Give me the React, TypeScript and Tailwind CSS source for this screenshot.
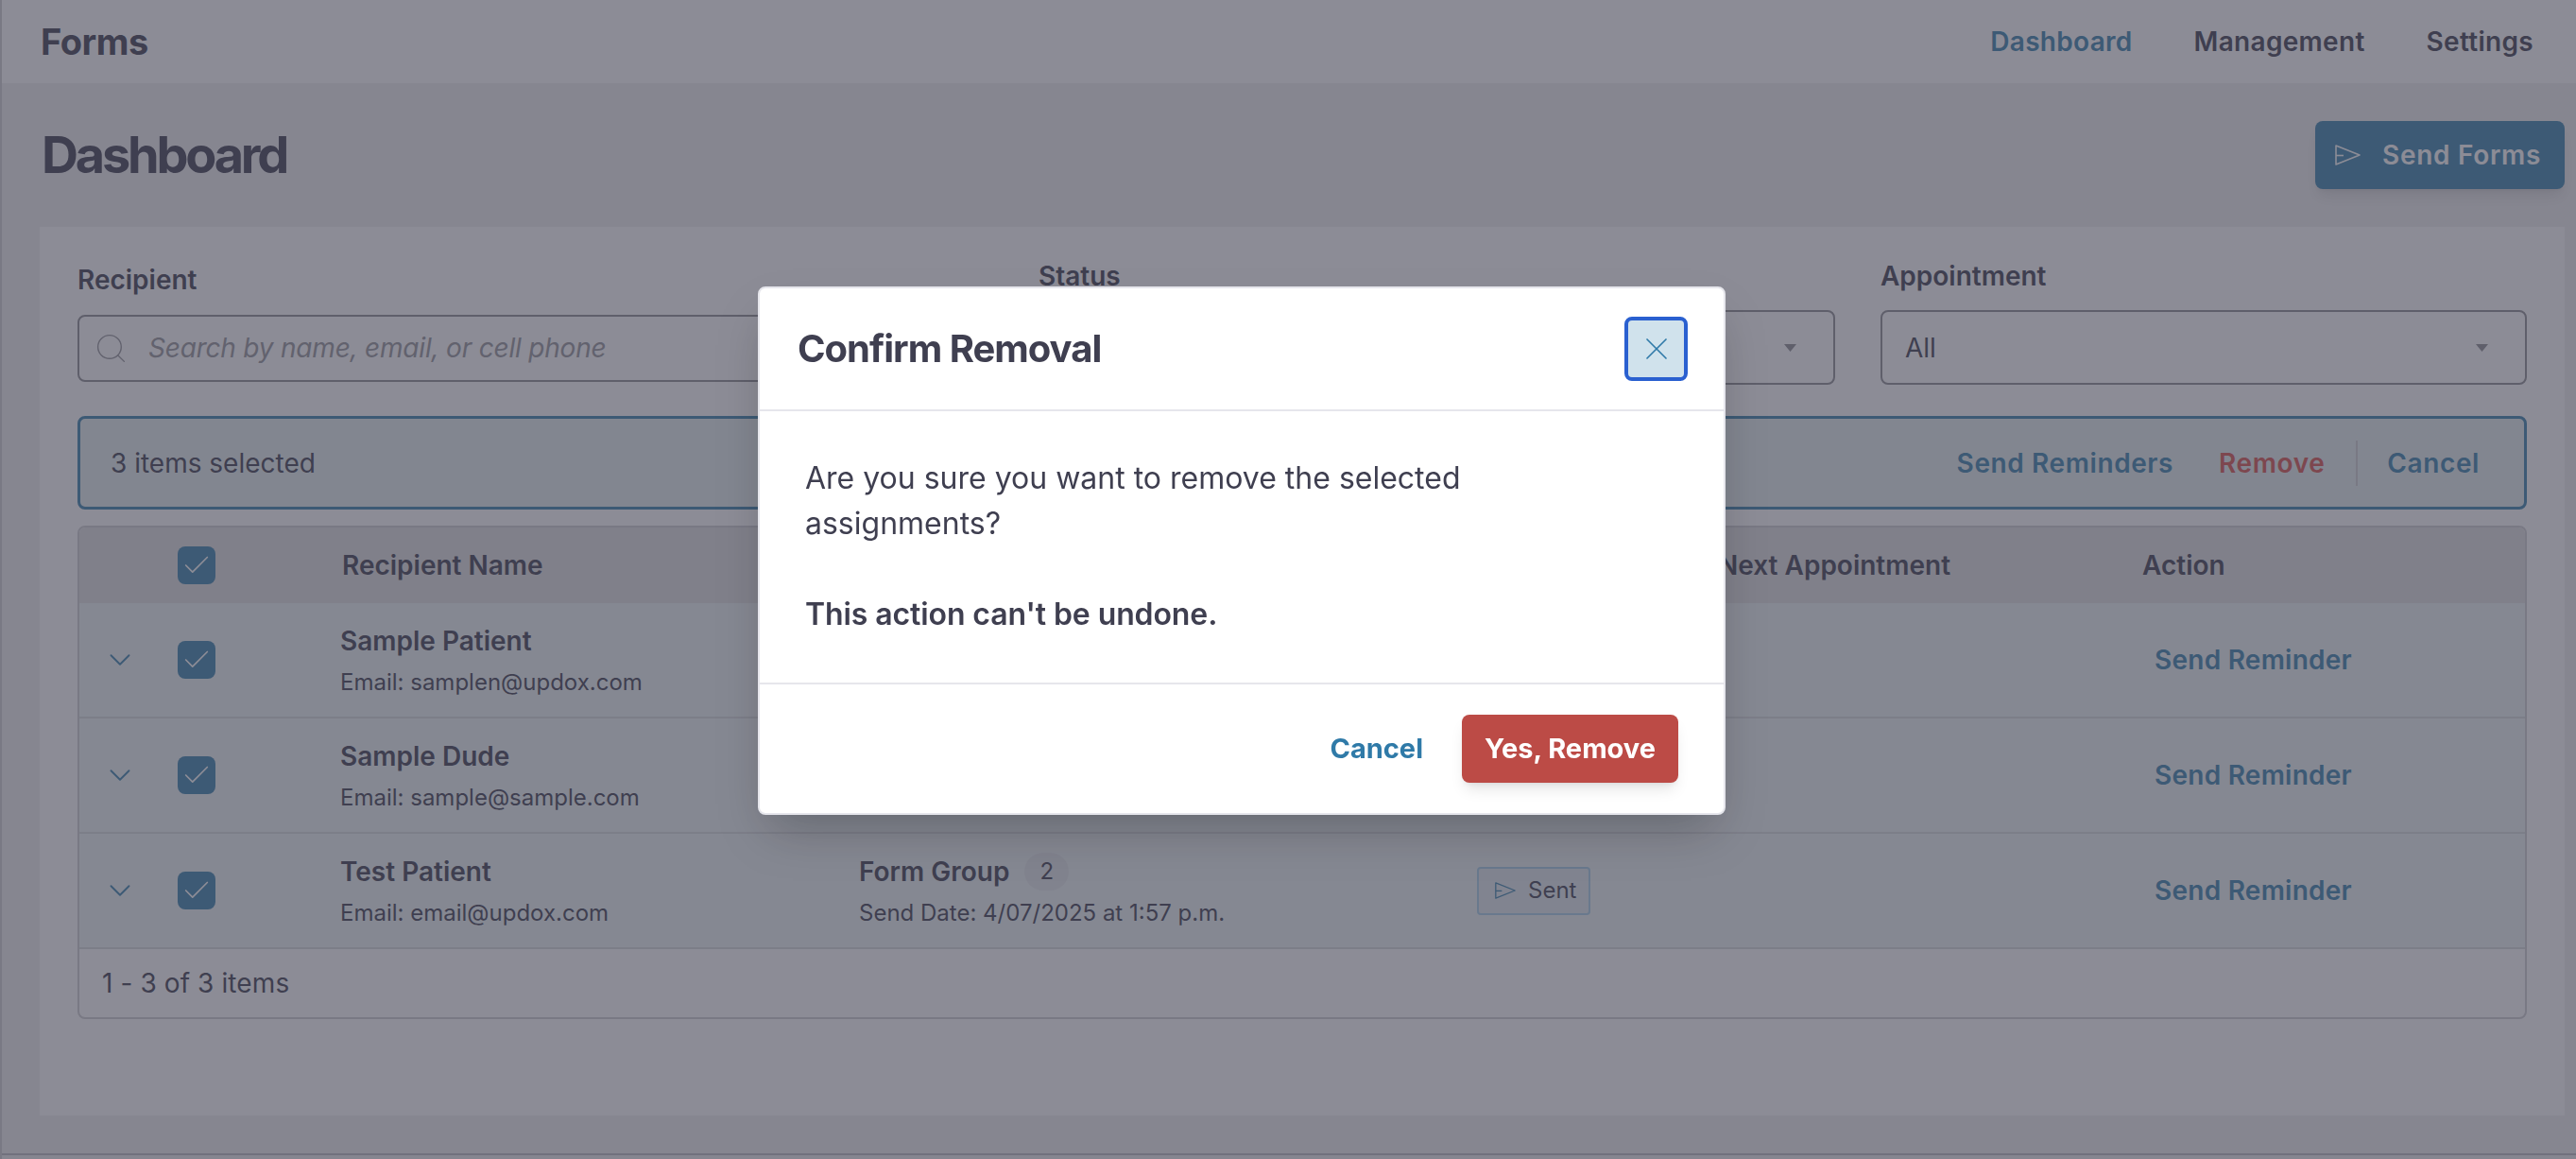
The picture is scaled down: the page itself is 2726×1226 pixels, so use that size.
import React from "react";
import { Check, ChevronDown, Search, X } from "lucide-react";

type Recipient = {
  name: string;
  email: string;
  form?: { title: string; count: number; sent: string };
};

const recipients: Recipient[] = [
  { name: "Sample Patient", email: "samplen@updox.com" },
  { name: "Sample Dude", email: "sample@sample.com" },
  {
    name: "Test Patient",
    email: "email@updox.com",
    form: { title: "Form Group", count: 2, sent: "Send Date: 4/07/2025 at 1:57 p.m." },
  },
];

const columns = "grid grid-cols-[104px_172px_549px_654px_255px_449px_1fr] items-center";

const SendIcon: React.FC<{ className?: string }> = ({ className }) => (
  <svg viewBox="0 0 27 22" fill="none" stroke="currentColor" strokeWidth="1.6" className={className}>
    <path d="M1 1 L26 11 L1 21 Z" strokeLinejoin="round" />
    <path d="M1 11.5 H9" />
  </svg>
);

const Caret: React.FC = () => (
  <svg viewBox="0 0 13 8" className="ml-auto w-[13px] h-2 text-[#8e8e93]" fill="currentColor">
    <path d="M0 0 H13 L6.5 8 Z" />
  </svg>
);

const CheckBox: React.FC = () => (
  <div className="flex justify-center items-center w-10 h-10 rounded-lg bg-[#3a82ac] text-white">
    <Check size={34} strokeWidth={1.2} />
  </div>
);

const SelectField: React.FC<{ label: string; value?: string; className: string }> = ({ label, value, className }) => (
  <div className={className}>
    <label className="block text-[28px] leading-[34px] font-semibold">{label}</label>
    <div className="flex items-center mt-[19px] h-[79px] pl-6 pr-[39px] bg-white border-2 border-[#8e8e93] rounded-lg text-[28px]">
      {value}
      <Caret />
    </div>
  </div>
);

const App: React.FC = () => {
  return (
    <div className="relative h-[1226px] overflow-hidden bg-[#f0f0f0] border-l-2 border-[#cfcfd2] text-[#3f3f50] font-['Inter',sans-serif]">
      <header className="flex justify-between items-center h-[88px] pl-[41px] pr-[45px] bg-white">
        <span className="text-[38px] font-bold tracking-[-0.5px]">Forms</span>
        <nav className="flex gap-[65px] text-[28px] font-semibold tracking-[0.3px]">
          <a className="text-[#3a82ac]">Dashboard</a>
          <a>Management</a>
          <a>Settings</a>
        </nav>
      </header>

      <main className="pl-10 pr-[12px]">
        <div className="flex justify-between items-center h-[152px]">
          <h1 className="pl-[2px] -mt-[2px] text-[54px] font-bold tracking-[-3.2px]">Dashboard</h1>
          <button className="flex items-center gap-[23px] w-[264px] h-[72px] pl-[21px] rounded-lg bg-[#3a82ac] text-white text-[28px] font-semibold tracking-[0.7px] shadow-lg">
            <SendIcon className="w-[27px] h-[22px]" />
            Send Forms
          </button>
        </div>

        <section className="h-[940px] px-10 pt-[35px] bg-white">
          <div className="flex items-center gap-12">
            <div className="w-[969px]">
              <label className="block text-[28px] leading-[34px] font-semibold">Recipient</label>
              <div className="flex items-center gap-[21px] mt-5 h-[71px] pl-[15px] bg-white border-2 border-[#8e8e93] rounded-lg">
                <Search size={37} strokeWidth={0.9} className="text-[#96969b]" />
                <span className="text-[28px] italic tracking-[-0.2px] text-[#96969b]">Search by name, email, or cell phone</span>
              </div>
            </div>
            <SelectField label="Status" className="w-[843px]" />
            <SelectField label="Appointment" value="All" className="flex-1" />
          </div>

          <div className="flex justify-between items-center mt-[33px] h-[99px] pl-[32px] pr-[47px] bg-[#e6f0f0] border-[3px] border-[#3a82ac] rounded-lg text-[28px]">
            <span>3 items selected</span>
            <div className="flex items-center font-semibold tracking-[0.6px] text-[#3a82ac]">
              <a>Send Reminders</a>
              <a className="ml-[48px] text-[#d9534f]">Remove</a>
              <span className="w-[2px] h-12 ml-[33px] mr-[31px] bg-[#cfcfd2]" />
              <a>Cancel</a>
            </div>
          </div>

          <div className="mt-[17px] border-2 border-[#cfcfd2] rounded-lg overflow-hidden">
            <div className={`${columns} h-[80px] bg-[#e1e1e1] text-[28px] font-semibold`}>
              <span />
              <CheckBox />
              <span className="pl-[2px]">Recipient Name</span>
              <span />
              <span />
              <span>Next Appointment</span>
              <span>Action</span>
            </div>

            {recipients.map((r) => (
              <div key={r.email} className={`${columns} h-[122px] bg-[#eef5f5] border-b-2 border-[#d8dcdd]`}>
                <ChevronDown size={38} strokeWidth={1.2} className="ml-[24px] text-[#3a82ac]" />
                <CheckBox />
                <div className="pt-[3px]">
                  <div className="text-[28px] leading-[34px] font-semibold">{r.name}</div>
                  <div className="mt-[10px] text-[24px] leading-[34px]">Email: {r.email}</div>
                </div>
                <div>
                  {r.form && (
                    <>
                      <div className="flex items-center gap-4 h-[40px]">
                        <span className="text-[28px] font-semibold">{r.form.title}</span>
                        <span className="flex justify-center items-center w-[47px] h-10 rounded-full bg-[#e4e8ea] text-[24px]">
                          {r.form.count}
                        </span>
                      </div>
                      <div className="mt-[7px] text-[24px] leading-[34px]">{r.form.sent}</div>
                    </>
                  )}
                </div>
                <div>
                  {r.form && (
                    <span className="inline-flex items-center gap-[13px] w-[120px] h-[51px] pl-[17px] bg-[#e4ecf0] border-2 border-[#a8cfe8] rounded-[4px] text-[24px]">
                      <SendIcon className="w-[22px] h-[18px] text-[#3a82ac]" />
                      Sent
                    </span>
                  )}
                </div>
                <span />
                <a className="pl-[13px] text-[28px] font-semibold tracking-[0.25px] text-[#3a82ac]">Send Reminder</a>
              </div>
            ))}

            <div className="flex items-center h-[72px] pl-6 text-[28px] tracking-[0.1px]">1 - 3 of 3 items</div>
          </div>
        </section>
      </main>

      <div className="mt-10 border-t-2 border-[#bcbcc0]" />

      {/* modal overlay */}
      <div className="fixed inset-0 pl-[802px] pt-[303px] bg-[#3f3f50]/60">
        <div className="w-[1024px] h-[559px] bg-white border-2 border-[#e6e6ec] rounded-lg shadow-2xl">
          <div className="flex justify-between items-center h-[130px] pl-[40px] pr-[38px] border-b-2 border-[#e6e6ec]">
            <h2 className="text-[40px] font-bold tracking-[-1px]">Confirm Removal</h2>
            <button className="flex justify-center items-center w-[67px] h-[68px] rounded-lg bg-[#d0e2ec] border-4 border-[#2a60d0] text-[#2f7aa8]">
              <X size={40} strokeWidth={1} />
            </button>
          </div>
          <div className="h-[287px] pt-[47px] pl-[48px] text-[32px] leading-[48px]">
            <p className="w-[760px]">Are you sure you want to remove the selected assignments?</p>
            <p className="mt-[48px] font-semibold tracking-[-0.1px]">This action can't be undone.</p>
          </div>
          <div className="flex justify-end items-center gap-[41px] h-[137px] pr-[48px] border-t-2 border-[#e6e6ec]">
            <a className="text-[29px] font-bold text-[#2f7aa8]">Cancel</a>
            <button className="h-[72px] w-[229px] rounded-lg bg-[#bc4b46] text-white text-[29px] font-bold shadow-lg">
              Yes, Remove
            </button>
          </div>
        </div>
      </div>
    </div>
  );
};

export default App;
